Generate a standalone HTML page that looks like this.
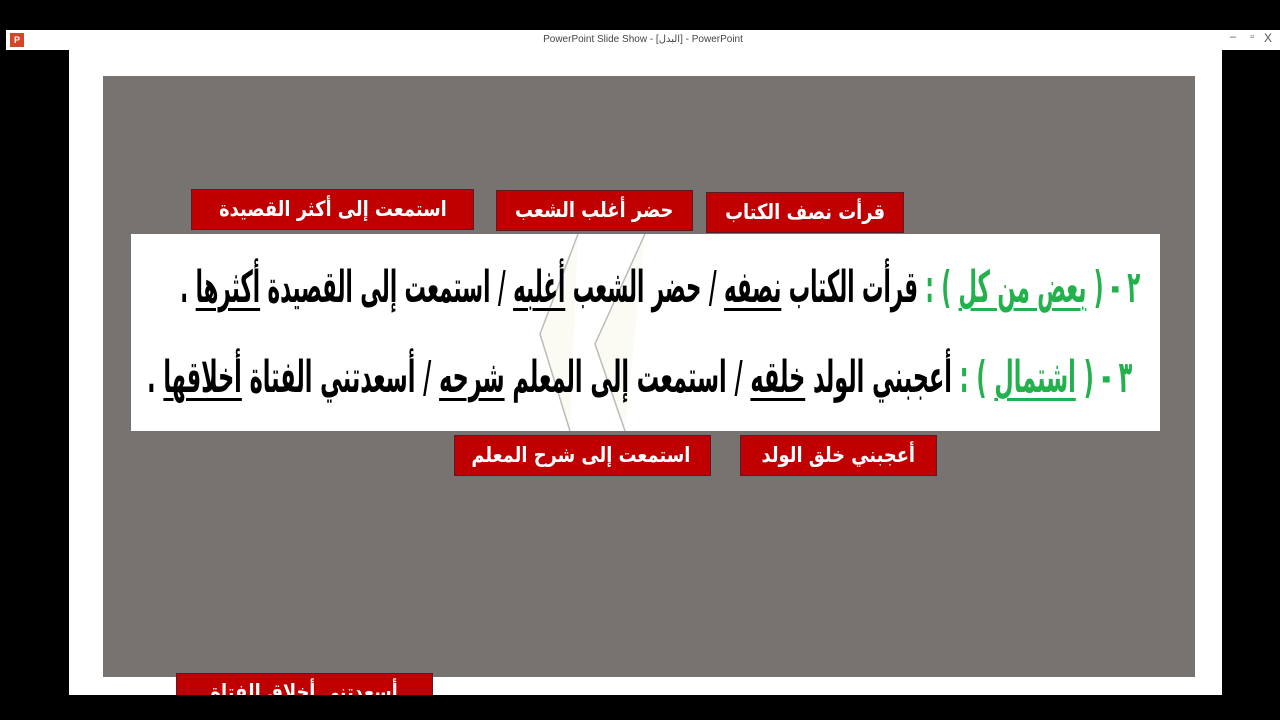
<!DOCTYPE html>
<html><head><meta charset="utf-8"><style>
*{margin:0;padding:0;box-sizing:border-box}
body{width:1280px;height:720px;background:#000;position:relative;overflow:hidden;font-family:"Liberation Sans","DejaVu Sans",sans-serif}
.abs{position:absolute}
.title{left:6px;top:30px;width:1274px;height:20px;background:#fff;font-size:10px;color:#444;text-align:center;line-height:20px}
.slide{left:69px;top:50px;width:1153px;height:645px;background:#fff}
.gray{left:103px;top:76px;width:1092px;height:601px;background:#767370}
.band{left:131px;top:234px;width:1029px;height:197px;background:#fff}
.red{background:#c00000;border:1px solid #5a1a2a;color:#fff;font-family:"DejaVu Sans",sans-serif;font-weight:bold;font-size:21px;direction:rtl;text-align:center;line-height:38px;white-space:nowrap;overflow:hidden}
.red span{display:inline-block;transform:scaleX(0.85)}
.line{direction:rtl;font-family:"DejaVu Sans",sans-serif;font-weight:bold;font-size:44px;white-space:nowrap;color:#000;transform-origin:right center}
.g{color:#22b14c}
u{text-decoration-thickness:3px;text-underline-offset:6px}
</style></head><body>
<div class="abs title">PowerPoint Slide Show - [البدل] - PowerPoint</div>
<div class="abs" style="left:10px;top:33px;width:14px;height:14px;background:#d24726;color:#fff;font-size:9px;font-weight:bold;text-align:center;line-height:14px">P</div>
<div class="abs" style="right:44px;top:31px;font-size:11px;color:#555">–</div>
<div class="abs" style="right:26px;top:31px;font-size:11px;color:#555">▫</div>
<div class="abs" style="right:8px;top:31px;font-size:12px;color:#555">X</div>
<div class="abs slide"></div>
<div class="abs gray"></div>
<div class="abs band"></div>
<svg class="abs" style="left:500px;top:234px" width="150" height="197"><path d="M78 0 L40 100 L70 197 M145 0 L95 110 L125 197" stroke="#bbb" stroke-width="1.5" fill="#fbfbf4"/></svg>
<div id="l1" class="abs line" style="right:140px;top:262px"><span class="g">٢ - ( <u>بعض من كل</u> ) :</span> قرأت الكتاب <u>نصفه</u> / حضر الشعب <u>أغلبه</u> / استمعت إلى القصيدة <u>أكثرها</u> .</div>
<div id="l2" class="abs line" style="right:148px;top:352px"><span class="g">٣ - ( <u>اشتمال</u> ) :</span> أعجبني الولد <u>خلقه</u> / استمعت إلى المعلم <u>شرحه</u> / أسعدتني الفتاة <u>أخلاقها</u> .</div>
<div class="abs red" style="left:191px;top:189px;width:283px;height:41px"><span>استمعت إلى أكثر القصيدة</span></div>
<div class="abs red" style="left:496px;top:190px;width:197px;height:41px"><span>حضر أغلب الشعب</span></div>
<div class="abs red" style="left:706px;top:192px;width:198px;height:41px"><span>قرأت نصف الكتاب</span></div>
<div class="abs red" style="left:454px;top:435px;width:257px;height:41px"><span>استمعت إلى شرح المعلم</span></div>
<div class="abs red" style="left:740px;top:435px;width:197px;height:41px"><span>أعجبني خلق الولد</span></div>
<div class="abs red" style="left:176px;top:673px;width:257px;height:41px;line-height:36px"><span>أسعدتني أخلاق الفتاة</span></div>
<div class="abs" style="left:0;top:695px;width:1280px;height:25px;background:#000"></div>
<script>
function fit(id,w){var e=document.getElementById(id);var s=w/e.offsetWidth;e.style.transform='scaleX('+s+')';}
fit('l1',960);fit('l2',985);
</script>
</body></html>
